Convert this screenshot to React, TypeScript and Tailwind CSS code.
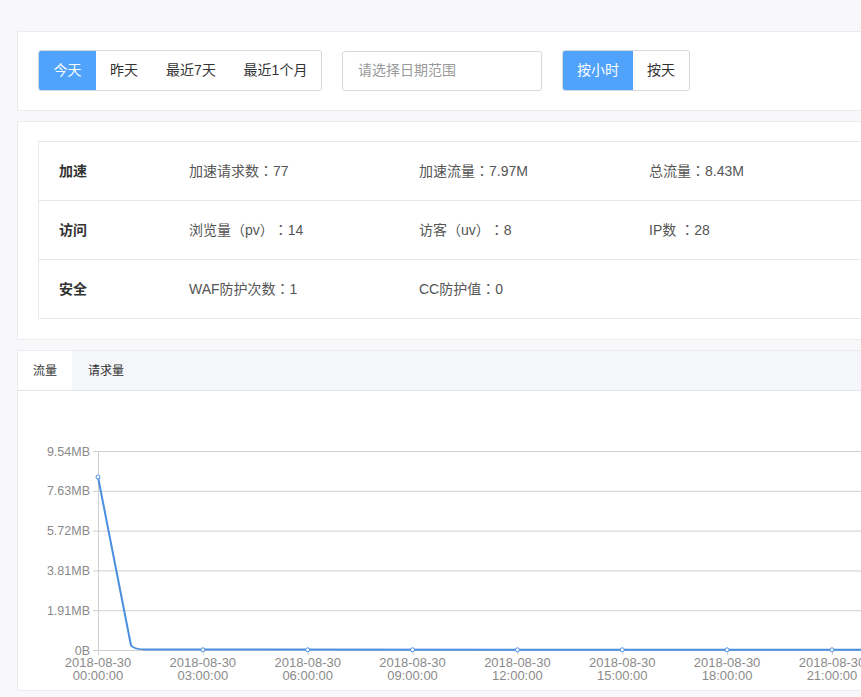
import React from "react";

const hours = [0, 3, 6, 9, 12, 15, 18, 21];
const yLabels = ["0B", "1.91MB", "3.81MB", "5.72MB", "7.63MB", "9.54MB"];

function Chart() {
  const x0 = 80;
  const step = 34.95;
  const yBase = 259;
  const gap = 39.8;
  const W = 1200;
  return (
    <svg width={W} height={300} className="block" style={{ fontFamily: '"Liberation Sans", Arial, sans-serif' }}>
      {yLabels.map((l, i) => {
        const y = yBase - i * gap;
        return (
          <g key={l}>
            <line x1={x0} x2={W} y1={y + 0.5} y2={y + 0.5} stroke="#cfcfcf" strokeWidth={1} />
            <line x1={x0 - 5} x2={x0} y1={y + 0.5} y2={y + 0.5} stroke="#cfcfcf" strokeWidth={1} />
            <text x={x0 - 8} y={y + 4.5} textAnchor="end" fontSize={12.5} fill="#8a8a8a">
              {l}
            </text>
          </g>
        );
      })}
      <line x1={x0 + 0.5} x2={x0 + 0.5} y1={yBase - 5 * gap} y2={yBase + 5} stroke="#cfcfcf" />
      {hours.map((h) => {
        const x = x0 + h * step;
        const hh = String(h).padStart(2, "0");
        return (
          <g key={h}>
            <line x1={x + 0.5} x2={x + 0.5} y1={yBase} y2={yBase + 5} stroke="#cfcfcf" />
            <text x={x} y={276} textAnchor="middle" fontSize={13} fill="#8a8a8a">
              2018-08-30
            </text>
            <text x={x} y={289} textAnchor="middle" fontSize={13} fill="#8a8a8a">
              {hh}:00:00
            </text>
          </g>
        );
      })}
      <path
        d={`M${x0} 86 L${x0 + 33} 254.5 Q${x0 + 36} 258.3 ${x0 + 48} 258.6 L${W} 258.8`}
        fill="none"
        stroke="#4a8fe0"
        strokeWidth={2}
        strokeLinejoin="round"
      />
      {hours.map((h) => (
        <circle
          key={h}
          cx={x0 + h * step}
          cy={h === 0 ? 86 : 258.8}
          r={2}
          fill="#fff"
          stroke="#4a8fe0"
          strokeWidth={1}
        />
      ))}
    </svg>
  );
}

function Val({ t }: { t: string }) {
  const parts = t.split(/([（）：])/);
  return (
    <span className="[text-spacing-trim:space-all]">
      {parts.map((p, i) =>
        /^[（）：]$/.test(p) ? (
          <span key={i} style={{ fontFamily: '"Noto Sans CJK TC", sans-serif' }}>
            {p}
          </span>
        ) : (
          <span key={i}>{p}</span>
        )
      )}
    </span>
  );
}

export default function App() {
  const rows = [
    { label: "加速", items: ["加速请求数：77", "加速流量：7.97M", "总流量：8.43M"] },
    { label: "访问", items: ["浏览量（pv）：14", "访客（uv）：8", "IP数 ：28"] },
    { label: "安全", items: ["WAF防护次数：1", "CC防护值：0", ""] },
  ];
  return (
    <div
      className="w-[861px] h-[697px] overflow-hidden bg-[#f8f8fa]"
      style={{ fontFamily: '"Liberation Sans", "Noto Sans CJK SC", sans-serif' }}
    >
      <div className="w-[1200px] pl-[17px] pt-[31px] flex flex-col gap-[10px]">
        {/* filter card */}
        <div className="bg-white border border-[#ececf0] px-[20px] pt-[18px] pb-[19px] flex items-center">
          <div className="flex h-[41px] border border-[#d5d8de] rounded-[3px] overflow-hidden text-[14px] text-[#333]">
            <div className="w-[57px] flex items-center justify-center bg-[#50a2fa] text-white">今天</div>
            <div className="w-[56px] flex items-center justify-center">昨天</div>
            <div className="w-[78px] flex items-center justify-center">最近7天</div>
            <div className="w-[91px] flex items-center justify-center">最近1个月</div>
          </div>
          <div className="ml-[20px] w-[200px] h-[40px] border border-[#d5d8de] rounded-[3px] flex items-center pl-[15px] text-[14px] text-[#9a9a9a]">
            请选择日期范围
          </div>
          <div className="ml-[20px] flex h-[41px] border border-[#d5d8de] rounded-[3px] overflow-hidden text-[14px] text-[#333]">
            <div className="w-[70px] flex items-center justify-center bg-[#50a2fa] text-white">按小时</div>
            <div className="w-[56px] flex items-center justify-center">按天</div>
          </div>
        </div>

        {/* stats card */}
        <div className="bg-white border border-[#ececf0] px-[20px] pt-[19px] pb-[20px]">
          <div className="border border-[#e8e8ec]">
            {rows.map((r, i) => (
              <div
                key={r.label}
                className={`grid grid-cols-[130px_230px_230px_230px] items-center pl-[20px] text-[14px] ${
                  i > 0 ? "border-t border-[#e8e8ec] h-[59px]" : "h-[58px]"
                }`}
              >
                <div className="font-bold text-[#333]">{r.label}</div>
                {r.items.map((t, j) => (
                  <div key={j} className="text-[#555]">
                    <Val t={t} />
                  </div>
                ))}
              </div>
            ))}
          </div>
        </div>

        {/* chart card */}
        <div className="bg-white border border-[#ececf0] h-[341px] overflow-hidden">
          <div className="flex h-[40px] bg-[#f5f6fa] border-b border-[#e4e5ea] text-[12px] text-[#333]">
            <div className="w-[54px] bg-white flex items-center justify-center">流量</div>
            <div className="px-[16px] flex items-center">请求量</div>
          </div>
          <Chart />
        </div>
      </div>
    </div>
  );
}
